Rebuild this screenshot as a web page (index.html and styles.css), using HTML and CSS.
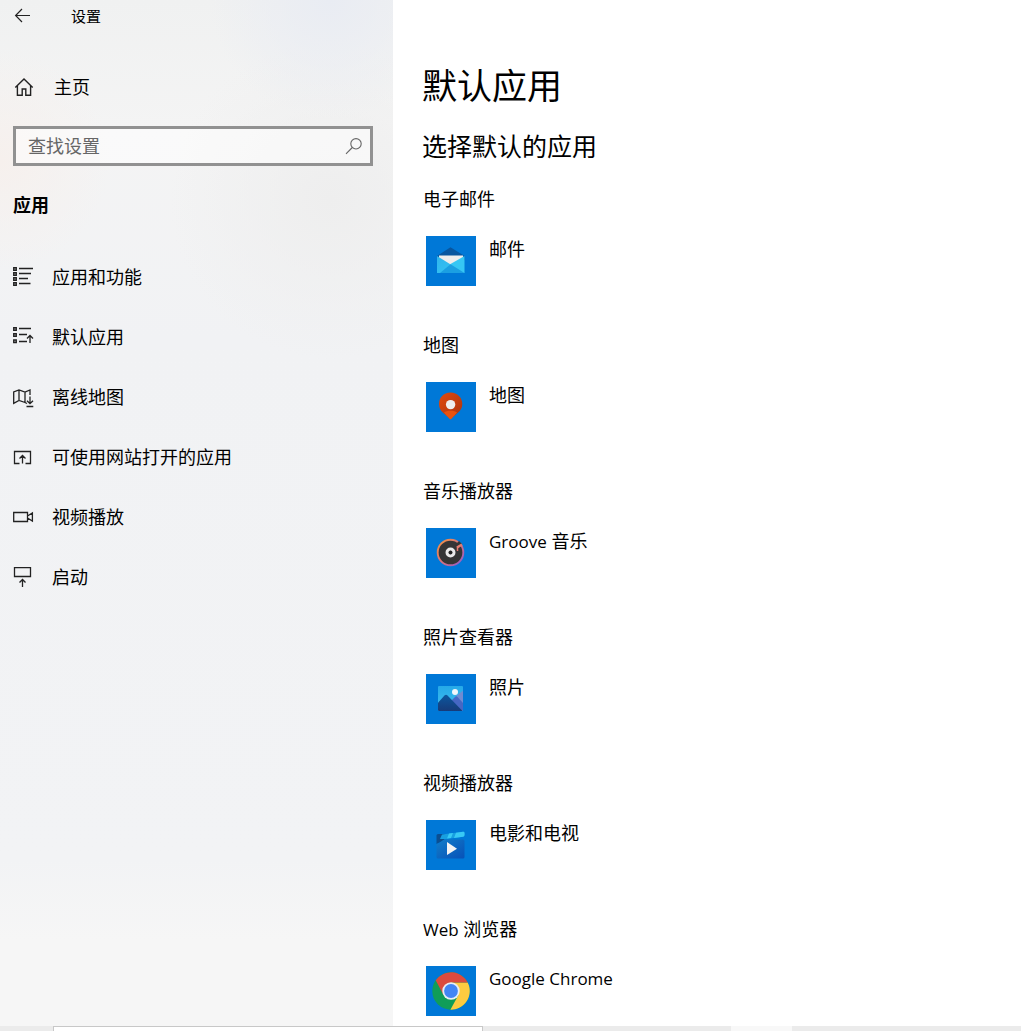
FILE: index.html
```html
<!DOCTYPE html>
<html lang="zh-CN">
<head>
<meta charset="utf-8">
<meta name="viewport" content="width=device-width, initial-scale=1">
<title>设置</title>
<link rel="stylesheet" href="styles.css">
</head>
<body>
<div class="window">
  <aside class="sidebar">
    <header class="titlebar">
      <button class="back" type="button" aria-label="返回">
        <svg width="20" height="20" viewBox="0 0 20 20" fill="none" stroke="#222" stroke-width="1.2"><path d="M17 9.5H3M9 3L2.6 9.5L9 16"/></svg>
      </button>
      <span class="window-title">设置</span>
    </header>
    <a class="home" href="#home">
      <svg width="20" height="20" viewBox="0 0 20 20" fill="none" stroke="#222" stroke-width="1.4"><path d="M1.3 10.4L10 2L18.7 10.4M3.4 8.8V18.2H8.2V12H11.8V18.2H16.6V8.8"/></svg>
      <span>主页</span>
    </a>
    <form class="search" role="search">
      <input class="search-input" type="text" placeholder="查找设置" aria-label="查找设置">
      <button class="search-button" type="submit" aria-label="搜索">
        <svg width="18" height="18" viewBox="0 0 18 18" fill="none" stroke="#666" stroke-width="1.1"><circle cx="11" cy="6.8" r="5.2"/><path d="M7.3 10.5L1 16.8"/></svg>
      </button>
    </form>
    <h2 class="group">应用</h2>
    <nav class="nav">
      <a class="nav-item" href="#apps">
        <svg width="22" height="22" viewBox="0 0 22 22" fill="none" stroke="#222"><path stroke-width="1.5" d="M.8 1.8h2.4v2.4H.8zM.8 6.8h2.4v2.4H.8zM.8 11.8h2.4v2.4H.8zM.8 16.8h2.4v2.4H.8z"/><path stroke-width="1.3" d="M6 2.5H20M6 7.5H18M6 12.5H15M6 17.5H17.5"/></svg>
        <span>应用和功能</span>
      </a>
      <a class="nav-item" href="#defaults">
        <svg width="22" height="22" viewBox="0 0 22 22" fill="none" stroke="#222"><path stroke-width="1.5" d="M.8 1.8h2.4v2.4H.8zM.8 7.8h2.4v2.4H.8zM.8 14h2.4v2.4H.8z"/><path stroke-width="1.3" d="M6 2.5H18M6 8.5H14M6 15.5H14M17 17V9.5M14 12.5L17 9.5L20 12.5"/></svg>
        <span>默认应用</span>
      </a>
      <a class="nav-item" href="#maps">
        <svg width="22" height="22" viewBox="0 -1 22 22" fill="none" stroke="#222" stroke-width="1.3"><path d="M14 16.5L12 15.5L6 13.5L.7 16.3V5L6 3L12 5L17 3V8M6 3V13.5M12 5V15.5M17 9.5V16.5M14 13.7L17 16.7L20 13.7M13.5 19.5H20.3"/></svg>
        <span>离线地图</span>
      </a>
      <a class="nav-item" href="#websites">
        <svg width="22" height="22" viewBox="0 -1 22 22" fill="none" stroke="#222" stroke-width="1.3"><path d="M6.5 16.5H1.5V4.5H17.5V16.5H12.5M9.5 16.5V8.5M6.5 11.5L9.5 8.5L12.5 11.5"/></svg>
        <span>可使用网站打开的应用</span>
      </a>
      <a class="nav-item" href="#video">
        <svg width="22" height="22" viewBox="0 -1 22 22" fill="none" stroke="#222" stroke-width="1.3"><path d="M.7 5.5H14.5V14.5H.7zM14.5 9L19.4 6V14L14.5 11"/></svg>
        <span>视频播放</span>
      </a>
      <a class="nav-item" href="#startup">
        <svg width="22" height="22" viewBox="0 -1 22 22" fill="none" stroke="#222" stroke-width="1.3"><path d="M1.5 .7H17.5V9.5H1.5zM9.5 20V12.5M6.5 15.5L9.5 12.5L12.5 15.5"/></svg>
        <span>启动</span>
      </a>
    </nav>
  </aside>

  <main class="content">
    <h1 class="page-title">默认应用</h1>
    <h2 class="subtitle">选择默认的应用</h2>
    <div class="defaults">
      <section class="default">
        <h3 class="label">电子邮件</h3>
        <button class="app" type="button">
          <svg class="tile" width="50" height="50" viewBox="0 0 50 50">
            <defs><linearGradient id="mail" x2="1" y2="1"><stop stop-color="#2fb4ed"/><stop offset="1" stop-color="#36c7f4"/></linearGradient></defs>
            <path d="M11 20L24.5 11.3L38.5 20V24H11z" fill="#08569f"/>
            <path d="M13 19.5H37V25L25 31L13 25z" fill="#ededed"/>
            <path d="M38.5 20L24.5 28L22 37H38.5z" fill="#36c7f4"/>
            <path d="M11 20L38.5 37H11z" fill="url(#mail)"/>
            <path d="M24.5 28.3L38.5 37H14z" fill="#1b9fe2"/>
          </svg>
          <span>邮件</span>
        </button>
      </section>
      <section class="default">
        <h3 class="label">地图</h3>
        <button class="app" type="button">
          <svg class="tile" width="50" height="50" viewBox="0 0 50 50">
            <defs><linearGradient id="pin" x2="1" y2="1"><stop stop-color="#e24a0d"/><stop offset="1" stop-color="#a93310"/></linearGradient></defs>
            <path d="M24.5 10.5C17.5 10.5 13 15.8 13 21.8C13 27 15.5 29.5 18 31.5L24.5 37L31 31.5C33.5 29.5 36.3 27 36.3 21.8C36.3 15.8 31.5 10.5 24.5 10.5z" fill="url(#pin)"/>
            <path d="M18 30.5C20 28 29 28 31 30.5C30 32 26 36 25.5 36.8Q24.5 37.8 23.5 36.8C23 36 19 32 18 30.5z" fill="#e8520f"/>
            <circle cx="24.6" cy="22.6" r="4.7" fill="#eee"/>
          </svg>
          <span>地图</span>
        </button>
      </section>
      <section class="default">
        <h3 class="label">音乐播放器</h3>
        <button class="app" type="button">
          <svg class="tile" width="50" height="50" viewBox="0 0 50 50">
            <defs><linearGradient id="ring" x2="1" y2="1"><stop stop-color="#f5953d"/><stop offset=".5" stop-color="#d9727c"/><stop offset="1" stop-color="#8b5bd0"/></linearGradient></defs>
            <circle cx="24.5" cy="24.5" r="12.8" fill="#353535" stroke="url(#ring)" stroke-width="1.9"/>
            <path d="M29 17L33 13L36 16L33 19.5z" fill="#353535"/>
            <path d="M31 19.5L36 16.5" stroke="#e37c70" stroke-width="2.6"/>
            <path d="M31.5 19V23" stroke="#e37c70" stroke-width="1.5"/>
            <circle cx="24.5" cy="24.5" r="3.5" fill="#333" stroke="#e9e9e9" stroke-width="3"/>
            <circle cx="24.5" cy="24.5" r="1.7" fill="#222"/>
          </svg>
          <span><span class="latin">Groove</span> 音乐</span>
        </button>
      </section>
      <section class="default">
        <h3 class="label">照片查看器</h3>
        <button class="app" type="button">
          <svg class="tile" width="50" height="50" viewBox="0 0 50 50">
            <defs>
              <linearGradient id="sky" x2="0" y2="1"><stop stop-color="#25a9e8"/><stop offset="1" stop-color="#43c0ef"/></linearGradient>
              <linearGradient id="hill" x2="0" y2="1"><stop stop-color="#0c579f"/><stop offset="1" stop-color="#173a78"/></linearGradient>
              <clipPath id="photo"><rect x="12" y="12" width="25" height="25" rx="1"/></clipPath>
            </defs>
            <g clip-path="url(#photo)">
              <rect x="12" y="12" width="25" height="25" fill="url(#sky)"/>
              <path d="M30 22L38 16V34z" fill="#6f8bd2"/>
              <path d="M25 27L29.5 22.5Q30.5 22 31.5 23L38 30V38H30z" fill="#4667c4"/>
              <path d="M11 30L18.5 21.5Q20 20.2 21.5 21.5L37 37.5H11z" fill="url(#hill)"/>
              <circle cx="29" cy="18" r="3" fill="#f1f6fb"/>
            </g>
          </svg>
          <span>照片</span>
        </button>
      </section>
      <section class="default">
        <h3 class="label">视频播放器</h3>
        <button class="app" type="button">
          <svg class="tile" width="50" height="50" viewBox="0 0 50 50">
            <defs><linearGradient id="film" x2="1" y2="1"><stop stop-color="#127dc9"/><stop offset="1" stop-color="#0751b8"/></linearGradient></defs>
            <path d="M10.5 15.5Q10.5 14 12 14H20L18 20L10.5 24z" fill="#0b4e91"/>
            <path d="M16 14.5L37 11.8Q38.5 11.6 38.5 13V15Q38.5 16.5 37 16.7L20 19L14 19z" fill="#179fe0"/>
            <path d="M23 13.6L27 13.1L25 18L21 18.6zM30 12.7L37 11.8Q38.5 11.6 38.5 13V15Q38.5 16.5 37 16.7L28 17.9z" fill="#38c9f5"/>
            <path d="M10.5 24Q15 23 16 21Q17 19.5 19 19.5H37Q38.5 19.5 38.5 21V37Q38.5 38.5 37 38.5H12Q10.5 38.5 10.5 37z" fill="url(#film)"/>
            <path d="M21 22L31 28.8L21 35z" fill="#f4f4f4"/>
          </svg>
          <span>电影和电视</span>
        </button>
      </section>
      <section class="default">
        <h3 class="label"><span class="latin">Web</span> 浏览器</h3>
        <button class="app" type="button">
          <svg class="tile" width="50" height="50" viewBox="0 0 50 50">
            <circle cx="25" cy="25" r="18.7" fill="#109d58"/>
            <path d="M25 16.5H41.7A18.7 18.7 0 0 1 24.4 43.7L32.3 29.2z" fill="#fdcb40"/>
            <path d="M9.7 14.3A18.7 18.7 0 0 1 41.7 16.5H25L17.6 29.2z" fill="#dc4a3e"/>
            <circle cx="25" cy="25" r="8.7" fill="#e9eef5"/>
            <circle cx="25" cy="25" r="6.9" fill="#4285f4"/>
          </svg>
          <span class="latin">Google Chrome</span>
        </button>
      </section>
    </div>
  </main>
</div>
<footer class="taskbar">
  <div class="taskbar-search"></div>
  <div class="taskbar-active"></div>
</footer>
</body>
</html>
```
FILE: styles.css
```css
* {
  box-sizing: border-box;
}

body {
  display: grid;
  grid-template-rows: 1fr auto;
  min-height: 100vh;
  margin: 0;
  background: #fff;
  color: #000;
  font-family: "Open Sans", "Noto Sans CJK SC", sans-serif;
  font-size: 18px;
  line-height: 24px;
}

button,
input {
  margin: 0;
  padding: 0;
  border: 0;
  background: none;
  color: inherit;
  font: inherit;
}

a {
  color: inherit;
  text-decoration: none;
}

svg {
  display: block;
  flex: none;
}

h1,
h2,
h3 {
  margin: 0;
  font-size: inherit;
  font-weight: 400;
}

.window {
  display: grid;
  grid-template-columns: minmax(240px, 393px) 1fr;
}

.sidebar {
  padding: 0 20px 0 13px;
  background:
    radial-gradient(circle at 0 160px, #f6f0ed, rgba(246, 240, 237, 0) 110px),
    radial-gradient(circle at 330px 0, #e9ecf3, rgba(233, 236, 243, 0) 120px),
    radial-gradient(circle at 330px 200px, #eeeeee, rgba(238, 238, 238, 0) 160px),
    linear-gradient(#f0f1f1 0, #f4f4f4 130px, #f1f2f4 340px, #f2f3f5 860px, #f6f6f6 940px, #f6f6f6);
}

.titlebar {
  display: flex;
  align-items: center;
  gap: 38px;
  height: 32px;
  font-size: 15px;
}

.home {
  display: flex;
  align-items: center;
  gap: 20px;
  height: 60px;
  margin-top: 25px;
  padding-left: 1px;
}

.search {
  display: flex;
  align-items: center;
  height: 40px;
  margin-top: 9px;
  padding: 0 7px 0 12px;
  border: 3px solid #919191;
  background: rgba(255, 255, 255, 0.5);
}

.search-input {
  flex: 1;
  min-width: 0;
  outline: 0;
}

.search-input::placeholder {
  color: #666;
  opacity: 1;
}

.group {
  margin: 27px 0 30px;
  font-weight: 700;
}

.nav-item {
  display: flex;
  align-items: center;
  gap: 17px;
  height: 60px;
}

.content {
  padding: 62px 29px 10px;
}

.page-title {
  font-size: 35px;
  line-height: 48px;
}

.subtitle {
  margin: 20px 0 25px;
  font-size: 25px;
  line-height: 32px;
}

.defaults {
  display: grid;
  gap: 47px;
}

.label {
  height: 24px;
  padding-left: 1px;
}

.latin {
  font-size: 17px;
}

.app {
  display: flex;
  align-items: flex-start;
  gap: 13px;
  margin-top: 25px;
  padding-left: 4px;
  line-height: 26px;
}

.tile {
  background: #0078d7;
}

.taskbar {
  display: flex;
  height: 5px;
  padding-left: 53px;
  background: #ebebeb;
}

.taskbar-search {
  width: 430px;
  border: 1px solid #c8c8c8;
  border-bottom: 0;
  background: #fff;
}

.taskbar-active {
  width: 61px;
  margin-left: 248px;
  background: #f8f8f8;
}
```
